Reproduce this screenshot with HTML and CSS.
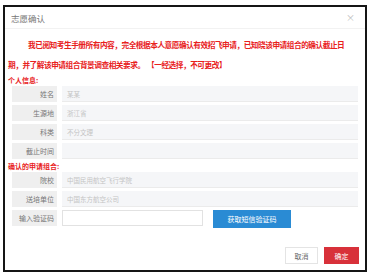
FILE: index.html
```html
<!DOCTYPE html>
<html lang="zh-CN">
<head>
    <meta charset="UTF-8" />
    <title>志愿确认</title>
    <link rel="stylesheet" href="styles.css">
</head>
<body>
    <div class="dialog">
        <div class="dialog-header">
            <span class="dialog-title">志愿确认</span>
            <span class="dialog-close">×</span>
        </div>
        <div class="dialog-body">
            <p class="notice">我已阅知考生手册所有内容，完全根据本人意愿确认有效招飞申请，已知晓该申请组合的确认截止日<br>期，并了解该申请组合背景调查相关要求。&nbsp;&nbsp;【一经选择，不可更改】</p>

            <div class="section-label">个人信息:</div>
            <div class="rows">
                <div class="row"><span class="label">姓名</span><span class="value">某某</span></div>
                <div class="row"><span class="label">生源地</span><span class="value">浙江省</span></div>
                <div class="row"><span class="label">科类</span><span class="value">不分文理</span></div>
                <div class="row"><span class="label">截止时间</span><span class="value"></span></div>
            </div>

            <div class="section-label">确认的申请组合:</div>
            <div class="rows">
                <div class="row"><span class="label">院校</span><span class="value">中国民用航空飞行学院</span></div>
                <div class="row"><span class="label">送培单位</span><span class="value">中国东方航空公司</span></div>
                <div class="row row-code">
                    <span class="label">输入验证码</span>
                    <input type="text" class="code-input" />
                    <button class="btn-sms" type="button">获取短信验证码</button>
                </div>
            </div>
        </div>
        <div class="dialog-footer">
            <button class="btn-cancel" type="button">取消</button>
            <button class="btn-ok" type="button">确定</button>
        </div>
    </div>
</body>
</html>
```

FILE: styles.css
```css
body {
    margin: 0;
    padding: 5px 7px 6px 3px;
    background-color: #fff;
    font-family: "Noto Sans CJK SC", "Noto Sans", sans-serif;
}
.dialog {
    width: 360px;
    height: 263px;
    border: 2px solid #151515;
    display: flex;
    flex-direction: column;
    background-color: #fff;
}
.dialog-header {
    height: 21px;
    display: flex;
    align-items: center;
    justify-content: space-between;
    padding: 0 10px 0 6px;
    border-bottom: 1px solid #f2f2f2;
}
.dialog-title {
    font-size: 8.5px;
    color: #777;
}
.dialog-close {
    font-size: 9px;
    color: #bbb;
}
.dialog-body {
    flex: 1;
    padding: 0 4px 0 3px;
}
.notice {
    margin: 6px 0 0 0;
    font-size: 7.7px;
    letter-spacing: -0.5px;
    line-height: 20px;
    font-weight: bold;
    color: #e8211c;
    text-indent: 20px;
    white-space: nowrap;
}
.section-label {
    height: 11px;
    line-height: 11px;
    font-size: 7px;
    font-weight: bold;
    color: #e8211c;
}
.rows {
    display: flex;
    flex-direction: column;
    gap: 3px;
    padding: 0 3px 0 4px;
    margin-bottom: 2px;
}
.row {
    display: flex;
    gap: 5px;
    height: 16px;
}
.label {
    width: 42px;
    padding-right: 3px;
    background-color: #efefef;
    color: #777;
    font-size: 7px;
    line-height: 16px;
    text-align: right;
}
.value {
    flex: 1;
    background-color: #f5f6f8;
    border-bottom: 1px solid #ebebeb;
    color: #c4c4c4;
    font-size: 6.5px;
    line-height: 16px;
    padding-left: 5px;
}
.code-input {
    width: 141px;
    height: 16px;
    box-sizing: border-box;
    border: 1px solid #e2e2e2;
    outline: none;
    margin: 0;
}
.btn-sms {
    margin-left: 5px;
    width: 78px;
    height: 18px;
    border: none;
    background-color: #2a8bd4;
    color: #fff;
    font-family: inherit;
    font-size: 7px;
    padding: 0;
}
.dialog-footer {
    display: flex;
    justify-content: flex-end;
    gap: 6px;
    padding: 0 6px 6px 0;
}
.btn-cancel, .btn-ok {
    height: 17px;
    font-family: inherit;
    font-size: 7px;
    padding: 0;
    cursor: pointer;
}
.btn-cancel {
    width: 33px;
    background-color: #fff;
    color: #666;
    border: 1px solid #e4e4e4;
}
.btn-ok {
    width: 35px;
    background-color: #d8313a;
    color: #fff;
    border: none;
}
```
